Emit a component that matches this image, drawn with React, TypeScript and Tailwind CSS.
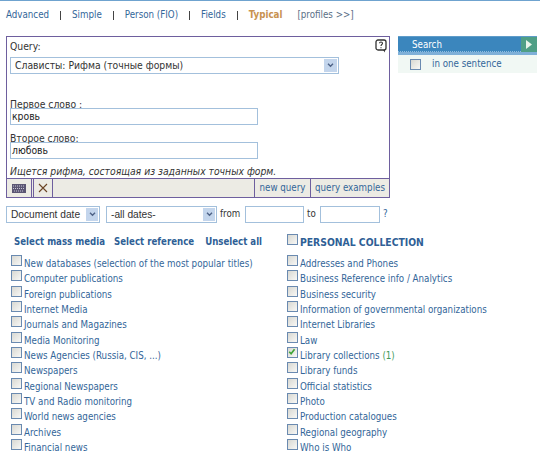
const font = "font-['DejaVu_Sans_Condensed','Liberation_Sans',sans-serif]";
const arial = "font-['Liberation_Sans',sans-serif]";

const leftItems = [
  'New databases (selection of the most popular titles)',
  'Computer publications',
  'Foreign publications',
  'Internet Media',
  'Journals and Magazines',
  'Media Monitoring',
  'News Agencies (Russia, CIS, ...)',
  'Newspapers',
  'Regional Newspapers',
  'TV and Radio monitoring',
  'World news agencies',
  'Archives',
  'Financial news',
];

const rightItems = [
  'Addresses and Phones',
  'Business Reference info / Analytics',
  'Business security',
  'Information of governmental organizations',
  'Internet Libraries',
  'Law',
  'Library collections',
  'Library funds',
  'Official statistics',
  'Photo',
  'Production catalogues',
  'Regional geography',
  'Who is Who',
];

function Check({ checked }: { checked?: boolean }) {
  return (
    <span className="relative block w-[11px] h-[11px] shrink-0 border border-[#6a8ab0] bg-gradient-to-br from-[#d8d8d2] to-[#f8f8f6]">
      {checked && (
        <svg viewBox="0 0 11 11" className="absolute inset-0 w-[9px] h-[9px]">
          <path d="M1.5 4.5 L3.8 7 L8 1.5" fill="none" stroke="#3fa535" strokeWidth="2" />
        </svg>
      )}
    </span>
  );
}

function Arrow({ className }: { className: string }) {
  return (
    <span className={`flex items-center justify-center shrink-0 bg-[#c3d5ec] ${className}`}>
      <svg viewBox="0 0 8 6" className="w-[7px] h-[5px]">
        <path d="M1 1 L4 4 L7 1" fill="none" stroke="#4d6185" strokeWidth="1.6" />
      </svg>
    </span>
  );
}

function Item({ label, checked, count }: { label: string; checked?: boolean; count?: string }) {
  return (
    <div className="flex items-start gap-[2px] h-[15.35px]">
      <Check checked={checked} />
      <span className="text-[9.7px] leading-[13px] pt-[2px] text-[#336699] whitespace-nowrap">
        {label}
        {count && <span className="text-[#3f9a5a]"> {count}</span>}
      </span>
    </div>
  );
}

function TextBox({ value, className }: { value?: string; className: string }) {
  return (
    <div className={`h-[17px] border border-[#a3c0dc] bg-white text-[10.3px] leading-[14px] pl-[1px] text-[#222] ${className}`}>
      {value}
    </div>
  );
}

function NavSep() {
  return <span className="w-[1px] h-[9px] mx-[11px] bg-[#444]" />;
}

export default function App() {
  return (
    <div className={`w-[540px] h-[457px] overflow-hidden bg-white border-t border-[#6fa3cf] ${font}`}>
      <nav className="flex items-center h-[13px] mt-[8px] ml-[6px] text-[9.7px] text-[#336699] whitespace-nowrap">
        <span>Advanced</span>
        <NavSep />
        <span>Simple</span>
        <NavSep />
        <span>Person (FIO)</span>
        <NavSep />
        <span>Fields</span>
        <NavSep />
        <span className="font-bold text-[#c8924f]">Typical</span>
        <span className="ml-[15px] text-[#5a6f86]">[profiles &gt;&gt;]</span>
      </nav>

      <div className="flex items-start mt-[14px] ml-[6px]">
        <section className="w-[384px] h-[162px] border border-[#6e5f9e] flex flex-col">
          <div className="relative flex-1 pl-[3px] pt-[3px] text-[#333] text-[10.3px]">
            <div className="leading-[13px]">Query:</div>
            <svg viewBox="0 0 12 14" className="absolute right-[2px] top-[2px] w-[12px] h-[14px]">
              <rect x="1" y="1" width="10" height="10" rx="2" fill="none" stroke="#333" strokeWidth="1.3" />
              <path d="M4.5 4.2 C4.5 2.5 7.5 2.5 7.5 4.2 C7.5 5.5 6 5.5 6 7 M6 8.2 V9.3" fill="none" stroke="#333" strokeWidth="1.1" />
              <path d="M8 11 L10 13.5 V11" fill="#333" />
            </svg>
            <div className="flex items-center justify-between w-[329px] h-[17px] mt-[4px] border border-[#a3c0dc] pl-[4px] pr-[1px]">
              <span className="pt-[1px]">Слависты: Рифма (точные формы)</span>
              <Arrow className="w-[13px] h-[13px]" />
            </div>
            <div className="mt-[25px] leading-[10px]">Первое слово :</div>
            <TextBox value="кровь" className="w-[248px] mt-[-1px]" />
            <div className="mt-[8px] leading-[10px]">Второе слово:</div>
            <TextBox value="любовь" className="w-[248px] mt-[-1px]" />
            <div className="mt-[6px] leading-[12px] italic">Ищется рифма, состоящая из заданных точных форм.</div>
          </div>
          <div className="flex h-[19px] bg-[#ecebe4] border-t border-[#6e5f9e] text-[9.7px] leading-[17px] text-[#336699] whitespace-nowrap">
            <div className="flex items-center justify-center w-[25px] border-r border-[#6e5f9e]">
              <svg viewBox="0 0 14 9" className="w-[14px] h-[9px]">
                <rect width="14" height="9" fill="#5b5674" />
                <path d="M1 2H13M1 4.5H13M2 7H12" stroke="#c9c7d6" strokeWidth="1" strokeDasharray="1 1" />
              </svg>
            </div>
            <div className="flex items-center justify-center w-[20px] ml-[1px] border-x border-[#6e5f9e]">
              <svg viewBox="0 0 10 10" className="w-[10px] h-[10px]">
                <path d="M1 1 L9 9 M9 1 L1 9" stroke="#6b4426" strokeWidth="1.1" />
              </svg>
            </div>
            <div className="flex-1" />
            <div className="w-[56px] text-center border-l border-[#6e5f9e]">new query</div>
            <div className="w-[79px] text-center border-l border-[#6e5f9e]">query examples</div>
          </div>
        </section>

        <aside className="ml-[8px] w-[139px] text-[9.7px]">
          <div className="flex h-[19px] bg-[#3b86bd] border-t border-[#5f9cc9] border-b-[3px] border-b-[#7fb0d8] text-white">
            <span className="flex-1 pl-[14px] pt-[1px] leading-[13px] border-b border-dotted border-[#8fbde0]">Search</span>
            <span className="flex items-center justify-center w-[16px] bg-[#4f9f86]">
              <svg viewBox="0 0 6 9" className="w-[6px] h-[9px]">
                <path d="M0 0 L6 4.5 L0 9 Z" fill="#e8f4ea" />
              </svg>
            </span>
          </div>
          <div className="flex items-center h-[18px] pl-[12px] bg-[#f1f8f4] text-[#336699]">
            <Check />
            <span className="ml-[11px] pt-[1px]">in one sentence</span>
          </div>
        </aside>
      </div>

      <div className="flex items-center h-[17px] mt-[8px] ml-[6px] text-[9.7px] text-[#333]">
        <div className={`flex items-center justify-between w-[94px] h-[17px] border border-[#a3c0dc] pl-[4px] pr-[1px] text-[10.2px] ${arial}`}>
          <span>Document date</span>
          <Arrow className="w-[12px] h-[13px]" />
        </div>
        <div className={`flex items-center justify-between w-[111px] h-[17px] ml-[6px] border border-[#a3c0dc] pl-[4px] pr-[1px] text-[10.2px] ${arial}`}>
          <span>-all dates-</span>
          <Arrow className="w-[12px] h-[13px]" />
        </div>
        <span className="ml-[3px] w-[25px]">from</span>
        <TextBox className="w-[59px]" />
        <span className="ml-[3px] w-[13px]">to</span>
        <TextBox className="w-[60px]" />
        <span className="ml-[3px] text-[#336699]">?</span>
      </div>

      <div className="flex mt-[11px]">
        <div className="w-[287px] pl-[11px]">
          <div className="flex h-[16px] pl-[3px] text-[9.6px] font-bold leading-[16px] text-[#2f5f96] whitespace-nowrap">
            <span>Select mass media</span>
            <span className="ml-[9px]">Select reference</span>
            <span className="ml-[11px]">Unselect all</span>
          </div>
          <div className="mt-[5px]">
            {leftItems.map((t) => (
              <Item key={t} label={t} />
            ))}
          </div>
        </div>
        <div>
          <div className="flex items-start gap-[2px] h-[16px] text-[10.3px] font-bold leading-[17px] text-[#2f5f96]">
            <Check />
            <span>PERSONAL COLLECTION</span>
          </div>
          <div className="mt-[5px]">
            {rightItems.map((t) => (
              <Item
                key={t}
                label={t}
                checked={t === 'Library collections'}
                count={t === 'Library collections' ? '(1)' : undefined}
              />
            ))}
          </div>
        </div>
      </div>
    </div>
  );
}
